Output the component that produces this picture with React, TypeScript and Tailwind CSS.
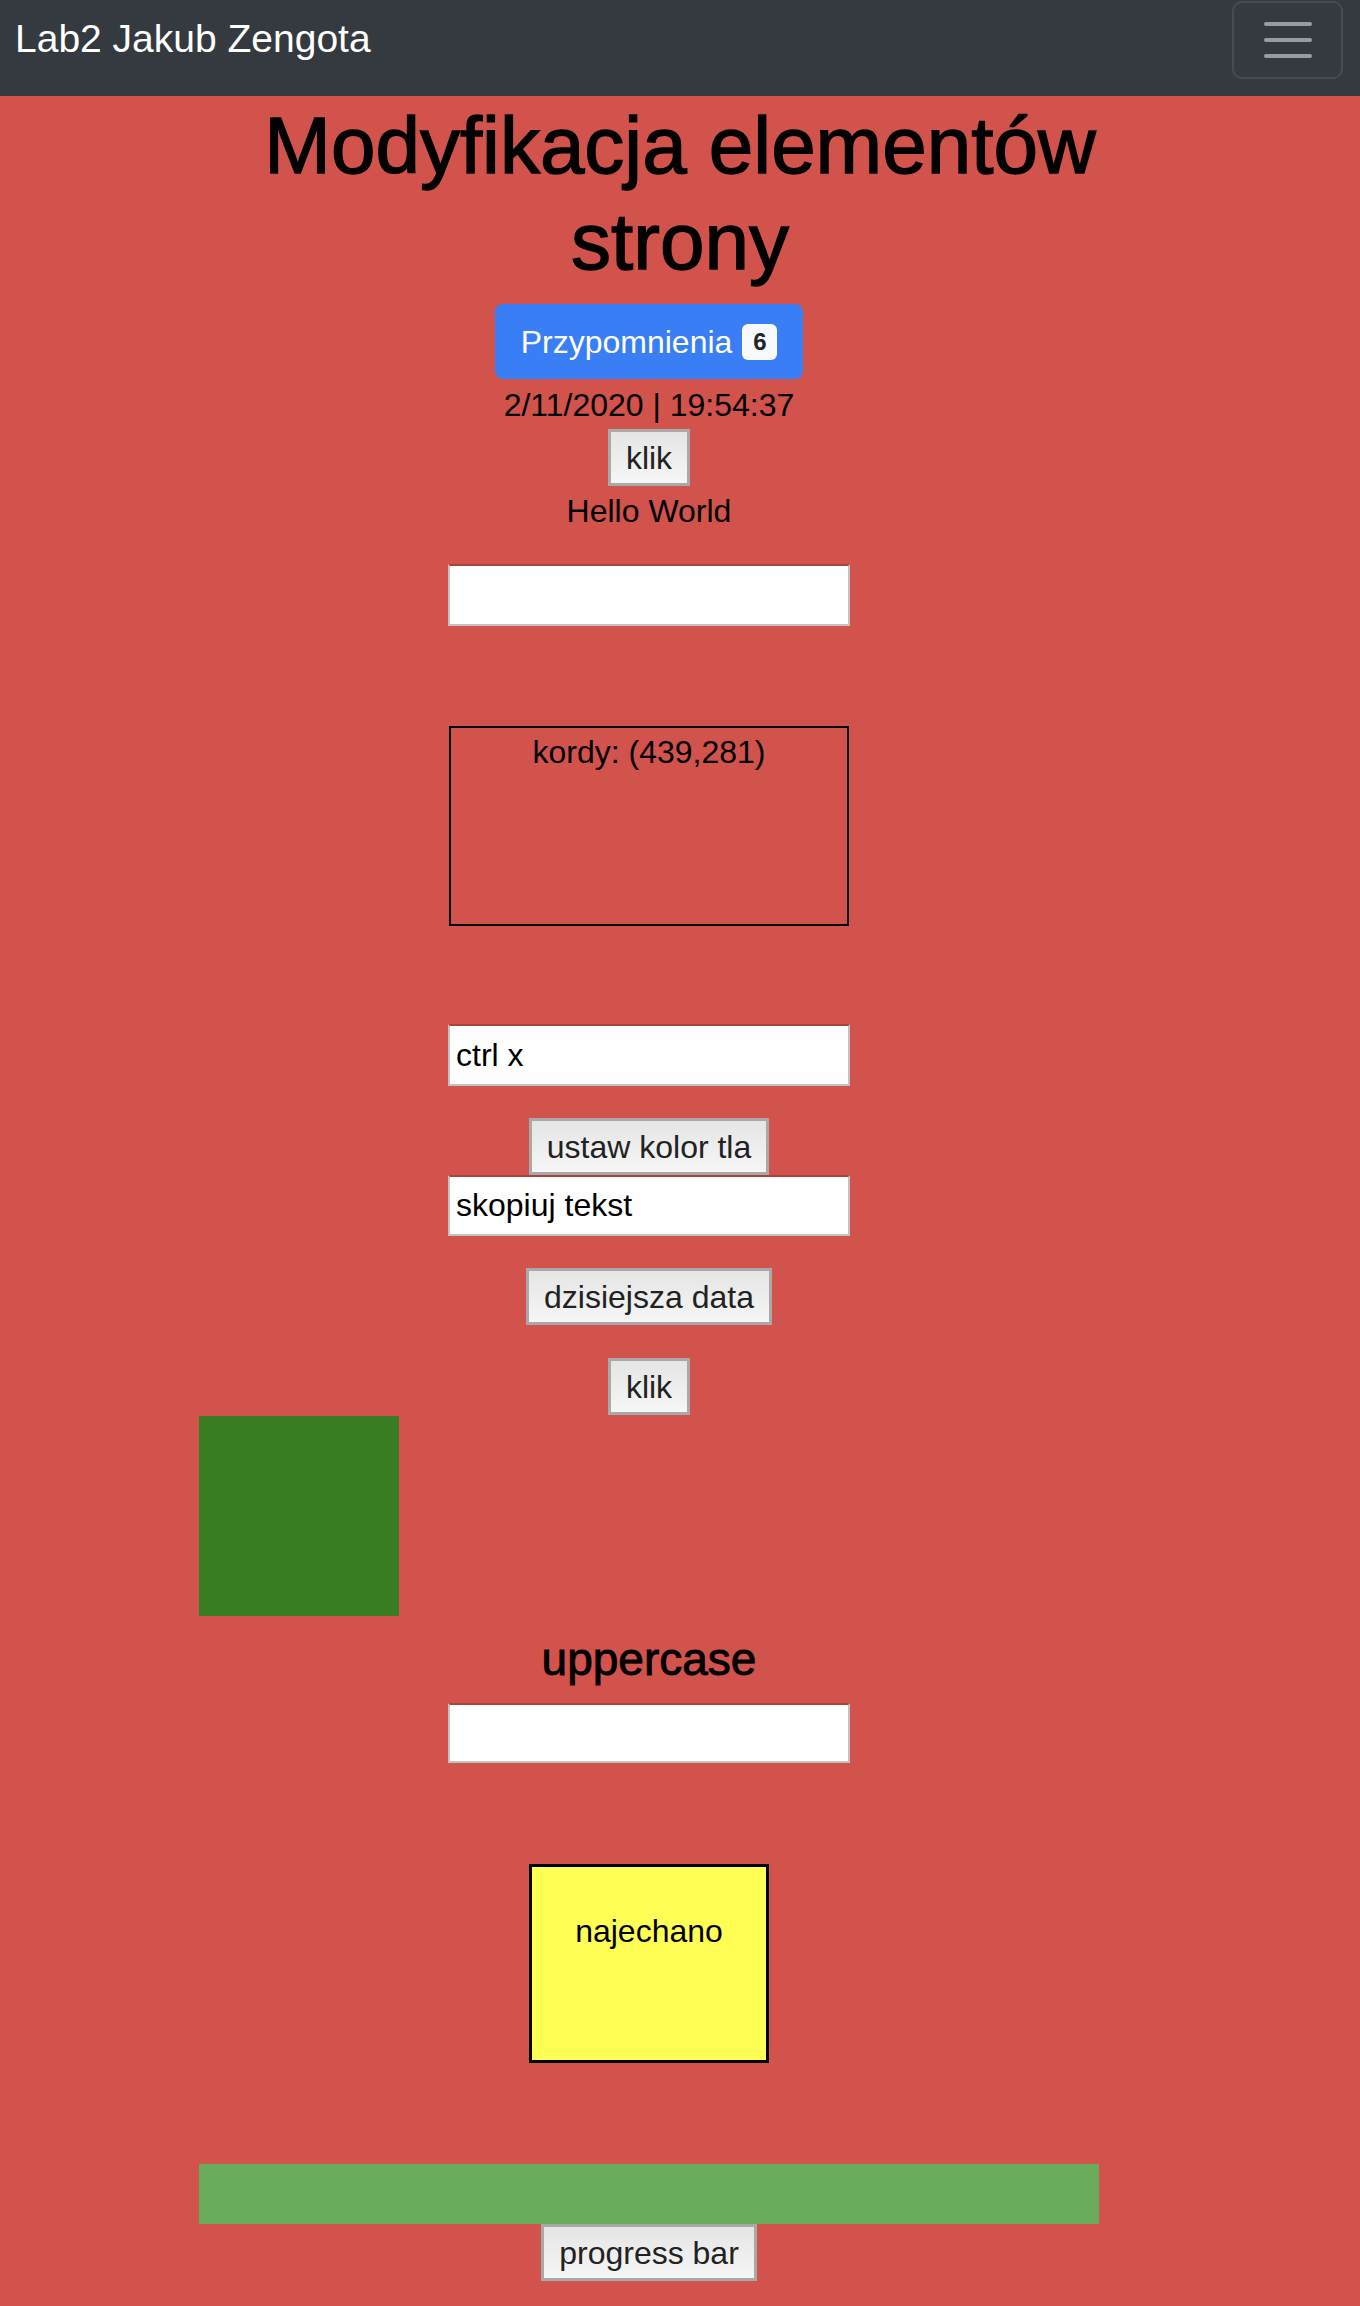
import React from "react";

const font = { fontFamily: '"Liberation Sans", Arial, Helvetica, sans-serif' };

function GrayButton({ children, className = "" }: { children: React.ReactNode; className?: string }) {
  return (
    <button
      className={`h-[57px] px-[15px] border-[3px] border-solid border-[#a9a9a9] bg-gradient-to-b from-[#e5e5e5] to-[#f6f6f6] text-[32px] leading-none text-[#222222] flex items-center justify-center ${className}`}
    >
      {children}
    </button>
  );
}

function TextInput({ value, className = "" }: { value?: string; className?: string }) {
  return (
    <input
      readOnly
      value={value ?? ""}
      className={`w-[402px] bg-white pl-[6px] text-[32px] text-black outline-none border-2 border-solid border-[#c2c2c2] border-t-[#a8433e] ${className}`}
    />
  );
}

export default function App() {
  return (
    <div className="min-h-[2306px] w-[1360px] bg-[#d2524c] text-black" style={font}>
      <nav className="h-[96px] bg-[#343a40] flex items-start justify-between">
        <div className="pt-[17px] pl-[15px] text-[39px] leading-[44px] text-white">Lab2 Jakub Zengota</div>
        <button className="mt-[1px] mr-[17px] w-[111px] h-[78px] rounded-[10px] border-2 border-solid border-[#464c52] flex items-center justify-center">
          <svg width="50" height="38" viewBox="0 0 50 38">
            <line x1="3" y1="3" x2="47" y2="3" stroke="#9a9da0" strokeWidth="4" strokeLinecap="round" />
            <line x1="3" y1="19" x2="47" y2="19" stroke="#9a9da0" strokeWidth="4" strokeLinecap="round" />
            <line x1="3" y1="35" x2="47" y2="35" stroke="#9a9da0" strokeWidth="4" strokeLinecap="round" />
          </svg>
        </button>
      </nav>

      <h1 className="mt-[2px] mx-auto w-[900px] text-center text-[80px] leading-[96px] font-normal [-webkit-text-stroke:1.4px_black]">
        Modyfikacja elementów strony
      </h1>

      <div className="ml-[199px] w-[900px] flex flex-col items-center">
        <button className="mt-[14px] h-[75px] px-[26px] rounded-[8px] bg-[#3a7ef5] text-white text-[32px] flex items-center">
          <span>Przypomnienia</span>
          <span className="ml-[10px] w-[35px] h-[36px] rounded-[6px] bg-[#f8f9fa] text-[#212529] text-[24px] font-bold flex items-center justify-center">
            6
          </span>
        </button>

        <div className="mt-[2px] text-[32px] leading-[48px]">2/11/2020 | 19:54:37</div>

        <GrayButton>klik</GrayButton>

        <div className="mt-[1px] text-[32px] leading-[48px]">Hello World</div>

        <TextInput className="mt-[29px] h-[62px]" />

        <div className="mt-[100px] w-[400px] h-[200px] border-2 border-solid border-black text-center text-[32px] leading-[48px]">
          kordy: (439,281)
        </div>

        <TextInput className="mt-[98px] h-[62px]" value="ctrl x" />

        <GrayButton className="mt-[32px]">ustaw kolor tla</GrayButton>

        <TextInput className="h-[61px]" value="skopiuj tekst" />

        <GrayButton className="mt-[32px]">dzisiejsza data</GrayButton>

        <GrayButton className="mt-[33px]">klik</GrayButton>

        <div className="self-start mt-[1px] w-[200px] h-[200px] bg-[#387d22]" />

        <h4 className="mt-[16px] text-[46px] leading-[55px] font-normal [-webkit-text-stroke:0.9px_black]">uppercase</h4>

        <TextInput className="mt-[16px] h-[60px]" />

        <div className="mt-[101px] w-[240px] h-[199px] border-[3px] border-solid border-black bg-[#ffff55] pt-[40px] text-center text-[32px] leading-[48px]">
          najechano
        </div>

        <div className="mt-[101px] w-[900px] h-[60px] bg-[#68ac5c]" />

        <GrayButton>progress bar</GrayButton>
      </div>
    </div>
  );
}
